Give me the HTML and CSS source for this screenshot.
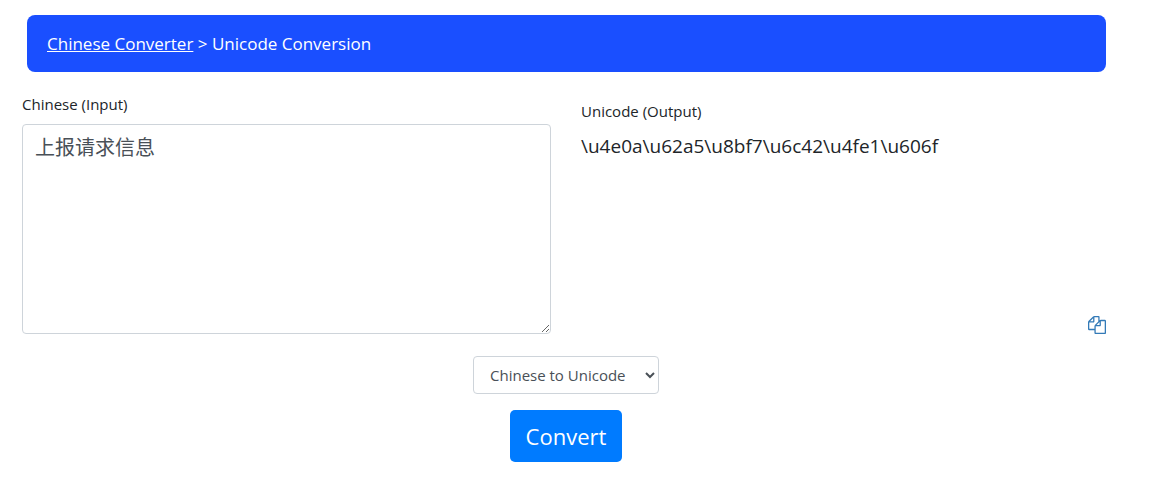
FILE: index.html
```html
<!DOCTYPE html>
<html lang="en">
  <head>
    <meta charset="UTF-8" />
    <meta name="viewport" content="width=device-width, initial-scale=1" />
    <title>Unicode Conversion</title>
    <link rel="stylesheet" href="styles.css">
  </head>
  <body>
    <nav class="breadcrumb">
      <a href="#">Chinese Converter</a> &gt; Unicode Conversion
    </nav>

    <form class="converter">
      <div class="row">
        <div class="input-col">
          <label for="source">Chinese (Input)</label>
          <textarea id="source" class="form-control" spellcheck="false">上报请求信息</textarea>
        </div>
        <div class="output-col">
          <label for="result">Unicode (Output)</label>
          <output id="result" for="source">\u4e0a\u62a5\u8bf7\u6c42\u4fe1\u606f</output>
          <button type="button" class="copy" aria-label="Copy">
            <svg width="18" height="18" viewBox="0 0 1792 1792" fill="currentColor"><path d="M1696 384q40 0 68 28t28 68v1216q0 40-28 68t-68 28h-960q-40 0-68-28t-28-68v-288h-544q-40 0-68-28t-28-68v-672q0-40 20-88t48-76l408-408q28-28 76-48t88-20h416q40 0 68 28t28 68v328q68-40 128-40h416zm-544 213l-299 299h299v-299zm-640-384l-299 299h299v-299zm196 647l316-316v-416h-384v416q0 40-28 68t-68 28h-416v640h512v-256q0-40 20-88t48-76zm956 804v-1152h-384v416q0 40-28 68t-68 28h-416v640h896z"/></svg>
          </button>
        </div>
      </div>

      <div class="actions">
        <select class="form-control" aria-label="Conversion">
          <option>Chinese to Unicode</option>
          <option>Unicode to Chinese</option>
        </select>
        <button type="button" class="convert">Convert</button>
      </div>
    </form>
  </body>
</html>
```
FILE: styles.css
```css
* {
  box-sizing: border-box;
}

body {
  margin: 0;
  padding: 15px 54px 16px 22px;
  font-family: "Segoe UI", "Open Sans", "Noto Sans CJK SC", sans-serif;
  font-size: 15px;
  line-height: 24px;
  color: #212529;
  background-color: #fff;
}

.breadcrumb {
  margin: 0 4px 20px 5px;
  padding: 16px 20px;
  border-radius: 8px;
  background-color: #1a4fff;
  color: #fff;
  font-size: 17px;
  line-height: 25px;
}

.breadcrumb a {
  color: #fff;
}

.row {
  display: grid;
  grid-template-columns: 1fr 1fr;
  gap: 30px;
}

.input-col,
.output-col {
  display: flex;
  flex-direction: column;
}

.input-col label,
.output-col label {
  margin-bottom: 8px;
}

.output-col {
  padding-top: 7px;
}

output {
  font-size: 19px;
  line-height: 30px;
  overflow-wrap: anywhere;
}

.copy {
  display: flex;
  align-self: flex-end;
  margin-top: auto;
  margin-right: 4px;
  padding: 0;
  border: none;
  background: none;
  color: #337ab7;
  cursor: pointer;
}

.form-control {
  border: 1px solid #ced4da;
  border-radius: 4px;
  background-color: #fff;
  color: #495057;
  font-family: inherit;
}

textarea.form-control {
  width: 100%;
  height: 210px;
  padding: 8px 12px;
  font-size: 20px;
  line-height: 30px;
}

.actions {
  display: flex;
  flex-direction: column;
  align-items: center;
  gap: 16px;
  margin-top: 22px;
}

select.form-control {
  width: 186px;
  height: 38px;
  padding: 6px 0 6px 12px;
  font-size: 15px;
}

.convert {
  padding: 8px 16px;
  border: none;
  border-radius: 5px;
  background-color: #007bff;
  color: #fff;
  font-family: inherit;
  font-size: 22px;
  line-height: 36px;
  cursor: pointer;
}
```
